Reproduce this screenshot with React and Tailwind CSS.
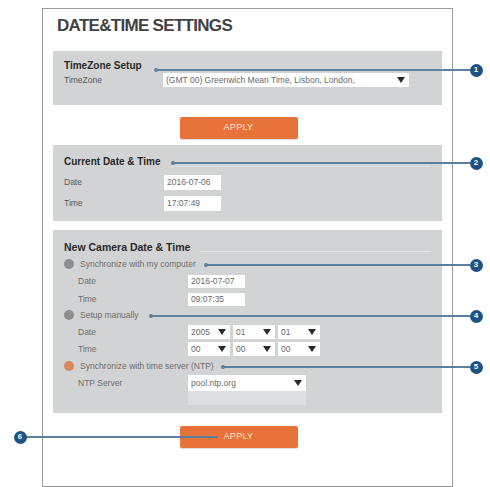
import React from "react";

const Caret = ({ className = "" }) => (
  <svg width="8" height="6" viewBox="0 0 8 6" className={className}>
    <polygon points="0,0 8,0 4,6" fill="#2b2b2b" />
  </svg>
);

const TextBox = ({ value, w = "w-[57px]", h = "h-[15px]" }) => (
  <div className={`${w} ${h} flex items-center bg-white pl-[3px] text-[8.5px] text-[#6a6a6a]`}>
    {value}
  </div>
);

const SelectBox = ({ value, w, h = "h-[14px]" }) => (
  <div className={`${w} ${h} flex items-center justify-between bg-white pl-[3px] pr-[4px] text-[8.5px] text-[#6a6a6a]`}>
    <span>{value}</span>
    <Caret />
  </div>
);

const Heading = ({ children, size = "text-[10px]", h = "h-[13px]" }) => (
  <div className={`flex ${h} items-center`}>
    <span className={`${size} whitespace-nowrap font-bold leading-none text-[#2a2a2a]`}>{children}</span>
    <div className="ml-[10px] mt-[9px] h-px flex-1 bg-[#e4e5e6]" />
  </div>
);

const Radio = ({ label, orange = false }) => (
  <div className="flex h-[14px] items-center">
    <div className={`h-[10px] w-[10px] rounded-full ${orange ? "bg-[#d98a5c]" : "bg-[#8e8e8e]"}`} />
    <span className="ml-[6px] text-[8.5px] text-[#6e6e6e]">{label}</span>
  </div>
);

const SubLabel = ({ children }) => (
  <div className="w-[124px] pl-[14px] text-[8.5px] text-[#6e6e6e]">{children}</div>
);

const ApplyButton = () => (
  <div className="flex h-[22px] w-[118px] items-center justify-center rounded-[2px] bg-[#e8733a] text-[9px] tracking-[0.3px] text-[#fbe1cf] shadow-[0_1px_1px_rgba(0,0,0,0.15)]">
    APPLY
  </div>
);

// numbered annotation marker with its leader line
const Callout = ({ n, y, from, to }) => (
  <>
    <div
      className="absolute h-[2px] bg-[#5f7f9f]"
      style={{ top: y - 1, left: from, width: to - from }}
    />
    <div
      className="absolute h-[4px] w-[4px] rounded-full bg-[#5f7f9f]"
      style={{ top: y - 2, left: from - 1 }}
    />
  </>
);

const Badge = ({ n, x, y }) => (
  <div
    className="absolute flex h-[13px] w-[13px] items-center justify-center rounded-full bg-[#1e5283] text-[8px] font-bold leading-none text-white"
    style={{ top: y - 6.5, left: x - 6.5 }}
  >
    {n}
  </div>
);

export default function App() {
  return (
    <div className="relative h-[487px] w-[490px] overflow-hidden bg-white font-['Liberation_Sans',Arial,sans-serif]">
      <div className="ml-[42px] mt-[8px] h-[479px] w-[411px] border border-[#9a9a9a] px-[10px] pt-[6px]">
        <h1 className="pl-[4px] text-[17px] font-bold leading-[22px] tracking-[-0.7px] text-[#424242]">
          DATE&amp;TIME SETTINGS
        </h1>

        {/* TimeZone Setup */}
        <section className="mt-[14px] h-[54px] bg-[#d2d3d4] px-[11px] pt-[8px]">
          <Heading>TimeZone Setup</Heading>
          <div className="mt-px flex h-[14px] items-center">
            <div className="w-[99px] text-[8.5px] text-[#5a5a5a]">TimeZone</div>
            <SelectBox w="w-[246px]" value="(GMT 00) Greenwich Mean Time, Lisbon, London," />
          </div>
        </section>

        <div className="mt-[12px] flex justify-center pr-[18px]">
          <ApplyButton />
        </div>

        {/* Current Date & Time */}
        <section className="mt-[6px] h-[76px] bg-[#d2d3d4] px-[11px] pt-[10px]">
          <Heading>Current Date &amp; Time</Heading>
          <div className="mt-[7px] flex items-center">
            <div className="w-[100px] text-[8.5px] text-[#5a5a5a]">Date</div>
            <TextBox value="2016-07-06" />
          </div>
          <div className="mt-[6px] flex items-center">
            <div className="w-[100px] text-[8.5px] text-[#5a5a5a]">Time</div>
            <TextBox value="17:07:49" />
          </div>
        </section>

        {/* New Camera Date & Time */}
        <section className="mt-[9px] h-[183px] bg-[#d2d3d4] px-[11px] pt-[10px]">
          <Heading size="text-[10.5px]" h="h-[14px]">New Camera Date &amp; Time</Heading>

          <div className="mt-[3px]">
            <Radio label="Synchronize with my computer" />
          </div>
          <div className="mt-[4px] flex items-center">
            <SubLabel>Date</SubLabel>
            <TextBox value="2016-07-07" h="h-[13px]" />
          </div>
          <div className="mt-[5px] flex items-center">
            <SubLabel>Time</SubLabel>
            <TextBox value="09:07:35" h="h-[13px]" />
          </div>

          <div className="mt-[2px]">
            <Radio label="Setup manually" />
          </div>
          <div className="mt-[3px] flex items-center">
            <SubLabel>Date</SubLabel>
            <div className="flex gap-[3px]">
              <SelectBox w="w-[42px]" value="2005" />
              <SelectBox w="w-[42px]" value="01" />
              <SelectBox w="w-[42px]" value="01" />
            </div>
          </div>
          <div className="mt-[3px] flex items-center">
            <SubLabel>Time</SubLabel>
            <div className="flex gap-[3px]">
              <SelectBox w="w-[42px]" value="00" />
              <SelectBox w="w-[42px]" value="00" />
              <SelectBox w="w-[42px]" value="00" />
            </div>
          </div>

          <div className="mt-[3px]">
            <Radio label="Synchronize with time server (NTP)" orange />
          </div>
          <div className="mt-[2px] flex items-start">
            <div className="flex h-[16px] items-center">
              <SubLabel>NTP Server</SubLabel>
            </div>
            <div className="flex flex-col">
              <SelectBox w="w-[118px]" h="h-[16px]" value="pool.ntp.org" />
              <div className="h-[14px] w-[118px] bg-[#dddedf]" />
            </div>
          </div>
        </section>

        <div className="mt-[13px] flex justify-center pr-[18px]">
          <ApplyButton />
        </div>
      </div>

      {/* annotations */}
      <Callout y={70} from={155} to={470} />
      <Callout y={163} from={172} to={470} />
      <Callout y={265} from={205} to={470} />
      <Callout y={316} from={150} to={470} />
      <Callout y={367} from={222} to={470} />
      <Callout y={437} from={20} to={218} />
      <Badge n="1" x={476} y={70} />
      <Badge n="2" x={476} y={163} />
      <Badge n="3" x={476} y={265} />
      <Badge n="4" x={476} y={316} />
      <Badge n="5" x={476} y={367} />
      <Badge n="6" x={20} y={437} />
    </div>
  );
}
